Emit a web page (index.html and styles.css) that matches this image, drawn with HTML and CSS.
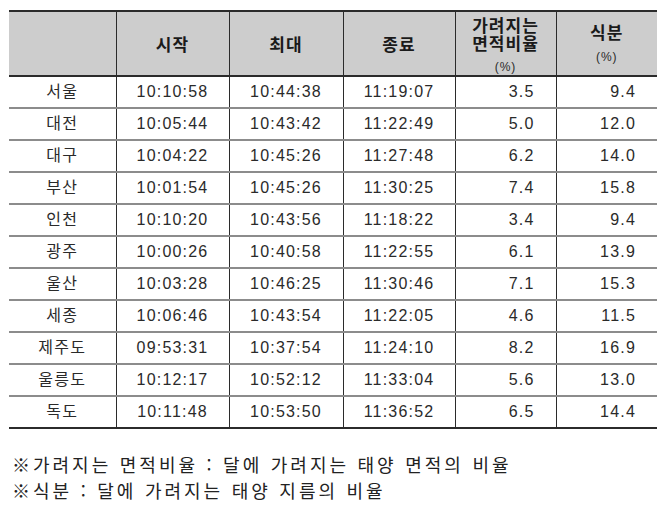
FILE: index.html
```html
<!DOCTYPE html>
<html lang="ko">
<head>
<meta charset="utf-8">
<title>일식 시각표</title>
<link rel="stylesheet" href="styles.css">
</head>
<body>
<div class="page">
  <table class="eclipse">
    <colgroup>
      <col class="c1"><col class="c2"><col class="c3"><col class="c4"><col class="c5"><col class="c6">
    </colgroup>
    <thead>
      <tr>
        <th></th>
        <th>시작</th>
        <th>최대</th>
        <th>종료</th>
        <th class="ratio"><span class="hl">가려지는</span><span class="hl">면적비율</span><span class="unit">(%)</span></th>
        <th class="sik"><span class="hl">식분</span><span class="unit">(%)</span></th>
      </tr>
    </thead>
    <tbody>
      <tr><td>서울</td><td>10:10:58</td><td>10:44:38</td><td>11:19:07</td><td class="num">3.5</td><td class="num">9.4</td></tr>
      <tr><td>대전</td><td>10:05:44</td><td>10:43:42</td><td>11:22:49</td><td class="num">5.0</td><td class="num">12.0</td></tr>
      <tr><td>대구</td><td>10:04:22</td><td>10:45:26</td><td>11:27:48</td><td class="num">6.2</td><td class="num">14.0</td></tr>
      <tr><td>부산</td><td>10:01:54</td><td>10:45:26</td><td>11:30:25</td><td class="num">7.4</td><td class="num">15.8</td></tr>
      <tr><td>인천</td><td>10:10:20</td><td>10:43:56</td><td>11:18:22</td><td class="num">3.4</td><td class="num">9.4</td></tr>
      <tr><td>광주</td><td>10:00:26</td><td>10:40:58</td><td>11:22:55</td><td class="num">6.1</td><td class="num">13.9</td></tr>
      <tr><td>울산</td><td>10:03:28</td><td>10:46:25</td><td>11:30:46</td><td class="num">7.1</td><td class="num">15.3</td></tr>
      <tr><td>세종</td><td>10:06:46</td><td>10:43:54</td><td>11:22:05</td><td class="num">4.6</td><td class="num">11.5</td></tr>
      <tr><td>제주도</td><td>09:53:31</td><td>10:37:54</td><td>11:24:10</td><td class="num">8.2</td><td class="num">16.9</td></tr>
      <tr><td>울릉도</td><td>10:12:17</td><td>10:52:12</td><td>11:33:04</td><td class="num">5.6</td><td class="num">13.0</td></tr>
      <tr class="last"><td>독도</td><td>10:11:48</td><td>10:53:50</td><td>11:36:52</td><td class="num">6.5</td><td class="num">14.4</td></tr>
    </tbody>
  </table>
  <div class="notes">
    <p>※가려지는 면적비율 : 달에 가려지는 태양 면적의 비율</p>
    <p>※식분 : 달에 가려지는 태양 지름의 비율</p>
  </div>
</div>
</body>
</html>
```

FILE: styles.css
```css
html, body {
  margin: 0;
  padding: 0;
  background: #ffffff;
}

.page {
  padding: 10px 0 0 9px;
  font-family: "Liberation Sans", "Noto Sans CJK KR", sans-serif;
  color: #2a2a2a;
}

.eclipse {
  border-collapse: collapse;
  table-layout: fixed;
  width: 648px;
}

.c1 { width: 107px; }
.c2 { width: 113px; }
.c3 { width: 114px; }
.c4 { width: 112px; }
.c5 { width: 101px; }
.c6 { width: 101px; }

.eclipse thead tr {
  background: #cdcdcd;
  border-top: 2px solid #2b2b2b;
  border-bottom: 2px solid #2b2b2b;
}

.eclipse th {
  height: 63px;
  padding: 0;
  font-family: "Noto Sans CJK KR", sans-serif;
  font-weight: bold;
  font-size: 17px;
  letter-spacing: 1px;
  color: #1a1a1a;
  text-align: center;
  vertical-align: middle;
  line-height: 18px;
}

.eclipse th .hl {
  display: block;
}

.eclipse th.ratio .hl:first-child {
  margin-top: 3px;
}

.eclipse th .unit {
  display: block;
  font-family: "Liberation Sans", sans-serif;
  font-weight: normal;
  font-size: 12px;
  line-height: 14px;
  margin-top: 8px;
  letter-spacing: 1px;
  color: #2a2a2a;
}

.eclipse th.sik .unit {
  margin-top: 9px;
}

.eclipse th + th,
.eclipse td + td {
  border-left: 1px solid #2b2b2b;
}

.eclipse td {
  height: 30px;
  padding: 0;
  font-size: 16px;
  letter-spacing: 1.2px;
  text-align: center;
  vertical-align: middle;
  line-height: 18px;
  border-bottom: 2px solid #8c8c8c;
}

.eclipse td.num {
  text-align: right;
  padding-right: 21px;
}

.eclipse tr.last td {
  border-bottom: 2px solid #2b2b2b;
}

.notes {
  margin-top: 22px;
  padding-left: 3px;
  font-family: "Noto Sans CJK KR", sans-serif;
  font-size: 18px;
  letter-spacing: 3px;
  word-spacing: 0.5px;
  color: #222222;
}

.notes p {
  margin: 0;
  line-height: 26px;
}
```
